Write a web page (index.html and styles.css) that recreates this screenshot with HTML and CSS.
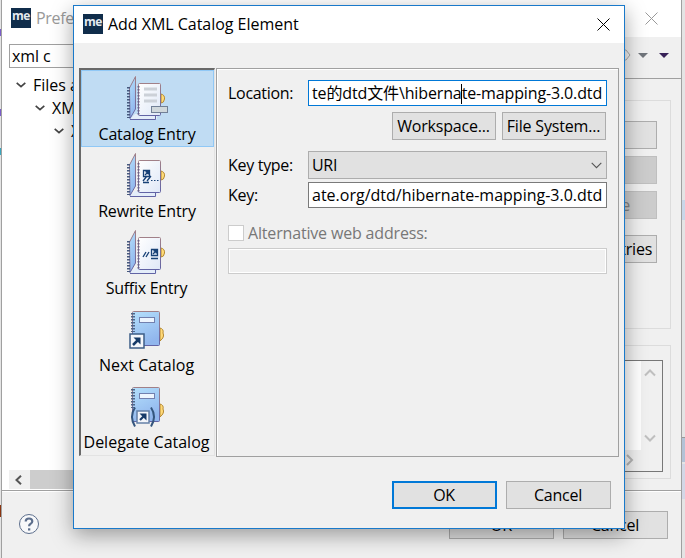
FILE: index.html
```html
<!DOCTYPE html>
<html lang="en">
<head>
<meta charset="utf-8">
<title>Add XML Catalog Element</title>
<link rel="stylesheet" href="styles.css">
</head>
<body>
<svg class="defs" width="0" height="0" aria-hidden="true">
  <defs>
    <linearGradient id="blue" x1="0" y1="0" x2="0.4" y2="1"><stop stop-color="#b4e0fc"/><stop offset="1" stop-color="#91b6ed"/></linearGradient>
    <linearGradient id="paper" x1="0" y1="0" x2="1" y2="1"><stop stop-color="#fff"/><stop offset="1" stop-color="#dfe8f7"/></linearGradient>
    <linearGradient id="edge" x1="0" y1="0" x2="0" y2="1"><stop stop-color="#a18088"/><stop offset="1" stop-color="#6264a5"/></linearGradient>
    <g id="binder">
      <path d="M4 43 L9 38 H31 V43 Z" fill="#e4edf9"/>
      <path d="M4 43.500H29.500V40" fill="none" stroke="#6264a5"/>
      <path d="M3.500 12 L9.500 .5 V33 L4 42.500Z" fill="url(#blue)" stroke="url(#edge)"/>
      <path d="M2.500 11V42" stroke="#46587e" stroke-width="3" stroke-dasharray="1.500 1.500"/>
      <path d="M35 18q4 1 3.500 5t-3.500 4z" fill="#ffdb78" stroke="#b58a35"/>
      <rect x="12.500" y="7.500" width="22" height="32" rx="1" fill="url(#paper)" stroke="url(#edge)"/>
      <path d="M12.500 10V39" stroke="#6b6286" stroke-width="2" stroke-dasharray="1.500 1.500"/>
    </g>
    <g id="book">
      <path d="M33 18q4 1 3 5q2 4-3 8z" fill="#ffd978" stroke="#b58a35"/>
      <rect x="5.500" y="1.500" width="27" height="34" rx="1" fill="url(#blue)" stroke="url(#edge)"/>
      <path d="M6 3V22" stroke="#506688" stroke-width="4" stroke-dasharray="1.500 1.500"/>
      <rect x="12.500" y="7.500" width="15" height="5" fill="#edf5fe" stroke="#7280ae"/>
    </g>
  </defs>
</svg>
<div class="desktop">
  <div class="speck s1"></div><div class="speck s2"></div><div class="speck s3"></div><div class="speck s4"></div>
  <div class="speck s5"></div><div class="speck s6"></div><div class="speck s7"></div>

  <section class="prefs">
    <header class="prefs-title"><span class="logo">me</span><span class="t">Preferences</span>
      <svg class="x" width="13" height="13"><path d="M.5.5l12 12M12.500.5l-12 12" stroke="#999" fill="none"/></svg>
    </header>
    <div class="prefs-main">
      <aside class="side">
        <div class="filter">xml c</div>
        <div class="tree">
          <div class="node l1"><svg width="10" height="6"><path d="M.7.8L5 4.600 9.300.8" fill="none" stroke="#444" stroke-width="1.700"/></svg>Files and Editors</div>
          <div class="node l2"><svg width="10" height="6"><path d="M.7.8L5 4.600 9.300.8" fill="none" stroke="#444" stroke-width="1.700"/></svg>XML</div>
          <div class="node l3"><svg width="10" height="6"><path d="M.7.8L5 4.600 9.300.8" fill="none" stroke="#444" stroke-width="1.700"/></svg>XML Catalog</div>
        </div>
        <div class="hscroll"><span class="arrow"><svg width="7" height="10"><path d="M6 .8L1.500 5 6 9.200" fill="none" stroke="#555" stroke-width="2"/></svg></span><span class="thumb"></span></div>
      </aside>
      <div class="page">
        <div class="tools">
          <svg width="60" height="14"><path d="M3 2h4l4 5-4 5H3" fill="none" stroke="#aaa"/><path d="M19 5h10l-5 5z" fill="#70757b"/><path d="M40 5h10l-5 5z" fill="#382258"/></svg>
        </div>
        <div class="group g1">
          <button class="btn">Add...</button><button class="btn off edit">Edit...</button><button class="btn off">Remove</button><button class="btn last">Reload Entries</button>
        </div>
        <div class="group g2">
          <div class="details"><div class="paper"></div>
            <div class="vbar"><svg width="12" height="8"><path d="M1 6.500L6 1.500l5 5" fill="none" stroke="#bfbfbf" stroke-width="2"/></svg><svg width="12" height="8"><path d="M1 1.500l5 5 5-5" fill="none" stroke="#bfbfbf" stroke-width="2"/></svg></div>
            <div class="hbar"><svg width="8" height="12"><path d="M1 1l5 5-5 5" fill="none" stroke="#b5b5b5" stroke-width="2"/></svg></div>
          </div>
        </div>
      </div>
    </div>
    <footer class="prefs-foot">
      <svg class="help" width="22" height="22"><circle cx="11" cy="11" r="9.500" fill="#f7f8fa" stroke="#5d6f8d"/><path d="M7.700 8.500Q7.800 5.500 11 5.500t3.300 2.800Q14.300 10 12.400 11 11.100 11.700 11.100 13.300" fill="none" stroke="#5d6f8d" stroke-width="2.200"/><path d="M10 15.300h2.300v2.200H10z" fill="#5d6f8d"/></svg>
      <button class="btn">OK</button><button class="btn">Cancel</button>
    </footer>
  </section>

  <section class="dialog">
    <header class="dialog-title"><span class="logo">me</span><span class="t">Add XML Catalog Element</span>
      <svg class="x" width="13" height="13"><path d="M.5.5l12 12M12.500.5l-12 12" stroke="#000" fill="none"/></svg>
    </header>
    <div class="dialog-main">
      <nav class="kinds">
        <div class="kind sel"><svg width="42" height="45"><use href="#binder"/><path d="M18 13h13M18 19h13M18 25h13" stroke="#ccd1d8" stroke-width="3"/><rect x="25.500" y="30.500" width="16" height="6" fill="#d0d8dc" stroke="#718096"/></svg><span class="n1">Catalog Entry</span></div>
        <div class="kind"><svg width="42" height="45"><use href="#binder"/><path d="M17.500 17.500h6v6h-6zM19 22l3-3M19.500 18.800h2.700v2.700M17 28l4-5M21 28l4-5M17 29.500h6" fill="none" stroke="#174176" stroke-width="1.300"/><path d="M25 27.500h8" stroke="#174176" stroke-dasharray="1.500 1.500"/></svg><span class="n2">Rewrite Entry</span></div>
        <div class="kind"><svg width="42" height="45"><use href="#binder"/><path d="M25.500 19.500h6v6h-6zM27 24l3-3M27.500 20.800h2.700v2.700M17 27l3-5M20 27l3-5M25 28.500h7" fill="none" stroke="#174176" stroke-width="1.300"/></svg><span class="n3">Suffix Entry</span></div>
        <div class="kind"><svg width="42" height="45"><use href="#book" x="1" y="3"/><rect x="4" y="27" width="14" height="14" fill="#f5f7fb" stroke="#3d5d87" stroke-width="1.500"/><path d="M7 38l6-6" stroke="#173b68" stroke-width="2.500"/><path d="M7.500 30.500h7v7z" fill="#173b68"/></svg><span class="n4">Next Catalog</span></div>
        <div class="kind"><svg width="42" height="45"><use href="#book" x="1" y="2"/><rect x="11" y="27" width="12" height="12" fill="#f2f5fa" stroke="#6480a7" stroke-width="1.500"/><path d="M14 36l5-5" stroke="#173b68" stroke-width="2.200"/><path d="M13.500 29.500h7v7z" fill="#173b68"/><path d="M9 23.500q-6 9 0 19M25 23.500q6 9 0 19" fill="none" stroke="#34567e" stroke-width="2"/></svg><span class="n5">Delegate Catalog</span></div>
      </nav>
      <form class="panel">
        <div class="row location"><label>Location:</label><div class="field focus"><span class="v v1">te的dtd文件\hiberna<i class="caret"></i>te-mapping-3.0.dtd</span></div></div>
        <div class="browse"><button type="button" class="btn">Workspace...</button><button type="button" class="btn">File System...</button></div>
        <div class="row keytype"><label>Key type:</label><div class="combo"><span>URI</span><svg width="11" height="7"><path d="M.7.8l4.800 4.800L10.300.8" fill="none" stroke="#555" stroke-width="1.100"/></svg></div></div>
        <div class="row key"><label>Key:</label><div class="field"><span class="v v2">ate.org/dtd/hibernate-mapping-3.0.dtd</span></div></div>
        <div class="alt"><span class="box"></span><span>Alternative web address:</span></div>
        <div class="field disabled"></div>
      </form>
    </div>
    <footer class="dialog-foot"><button class="btn default">OK</button><button class="btn">Cancel</button></footer>
  </section>
</div>
</body>
</html>
```
FILE: styles.css
```css
* { box-sizing: border-box; }
body { margin: 0; overflow: hidden; font: 16px/22px "Open Sans", "Noto Sans CJK SC", sans-serif; letter-spacing: -.3px; color: #000; }
svg { display: block; flex: none; }
.defs { position: absolute; }
.desktop { position: relative; width: 685px; height: 558px; overflow: hidden; background: #e4e4e4; }
.speck { position: absolute; left: 0; width: 2px; height: 7px; background: #7a5cc8; }
.s1 { top: 29px; } .s2 { top: 109px; } .s3 { top: 148px; background: #3aa6bd; }
.s4 { top: 505px; height: 12px; background: #8a3510; }
.s5 { left: 682px; width: 3px; top: 200px; height: 20px; background: #c9d6e8; }
.s6 { left: 682px; width: 3px; top: 437px; height: 25px; background: #b3c2d6; border-top: 1px solid #999; }
.s7 { left: 682px; width: 3px; top: 464px; height: 35px; background: #d3d7e6; }
.btn { display: flex; align-items: center; justify-content: center; height: 28px; width: 105px; padding: 0 1px 0 0; border: 1px solid #adadad; background: #e1e1e1; font: inherit; letter-spacing: -.25px; color: #000; white-space: nowrap; flex: none; }
.logo { width: 20px; height: 20px; background: #102d4b; color: #e4eaf0; font: bold 12px/16px "Open Sans", sans-serif; text-align: center; letter-spacing: -.5px; flex: none; }
.t { white-space: nowrap; }
.x { margin-left: auto; }

.prefs { position: absolute; left: 1px; top: -1px; width: 681px; height: 580px; border: 1px solid #a0a0a0; background: #f0f0f0; display: flex; flex-direction: column; }
.prefs-title { height: 37px; background: #fff; display: flex; align-items: center; padding: 0 23px 1px 9px; color: #999; flex: none; }
.prefs-title .t { margin-left: 5px; }
.prefs-main { height: 454px; display: flex; flex: none; border-bottom: 1px solid #a0a0a0; }
.side { width: 180px; padding-left: 7px; background: #fff; display: flex; flex-direction: column; }
.filter { height: 24px; margin-top: 7px; border: 1px solid #a0a0a0; padding-left: 2px; line-height: 23px; flex: none; letter-spacing: -.1px; }
.tree { flex: 1; padding-top: 5px; overflow: hidden; }
.node { height: 23px; display: flex; align-items: center; gap: 7px; white-space: nowrap; letter-spacing: 0; }
.l1 { padding-left: 7px; } .l2 { padding-left: 26px; } .l3 { padding-left: 45px; }
.hscroll { height: 19px; margin-bottom: 1px; display: flex; }
.arrow { width: 21px; background: #f0f0f0; display: flex; align-items: center; justify-content: center; padding-right: 2px; }
.thumb { flex: 1; background: #cdcdcd; }
.page { flex: 1; }
.tools { height: 42px; display: flex; justify-content: flex-end; padding: 11px 2px 0 0; border-bottom: 1px solid #a0a0a0; }
.group { border: 1px solid #dcdcdc; margin: 0 10px 0 8px; }
.g1 { height: 229px; margin-top: 21px; padding: 20px 13px 0; display: flex; flex-direction: column; align-items: flex-end; gap: 7px; }
.g1 .btn { width: 122px; }
.g1 .off { background: #ccc; border-color: #bfbfbf; color: #838383; justify-content: flex-end; padding-right: 26px; }
.g1 .edit { padding-right: 36px; }
.g1 .last { margin-top: 9px; justify-content: flex-end; padding-right: 4px; }
.g2 { height: 134px; margin-top: 16px; padding: 14px 7px 0 8px; }
.details { height: 112px; border: 1px solid #777; display: grid; grid-template: 1fr 21px / 1fr 21px; }
.paper { background: #fff; }
.vbar { display: flex; flex-direction: column; justify-content: space-between; align-items: center; padding: 8px 3px 8px 0; }
.hbar { display: flex; align-items: center; justify-content: flex-end; padding: 0 7px 2px 0; }
.prefs-foot { border-top: 1px solid #fff; display: flex; align-items: flex-start; gap: 9px; padding: 19px 13px 0 16px; }
.help { margin: 2px auto 0 0; }

.dialog { position: absolute; left: 73px; top: 5px; width: 552px; height: 524px; border: 1px solid #1979ca; background: #f0f0f0; box-shadow: 0 6px 20px rgba(0,0,0,.36); display: flex; flex-direction: column; }
.dialog-title { height: 37px; background: #fff; display: flex; align-items: center; padding: 0 14px 1px 9px; flex: none; }
.dialog-title .t { margin-left: 5px; letter-spacing: -.03px; }
.dialog-main { display: flex; padding: 25px 0 0 5px; height: 414px; }
.kinds { width: 136px; height: 388px; border: 2px solid #696969; border-right-color: #e3e3e3; border-bottom-color: #e3e3e3; border-width: 2px 1px 1px 2px; flex: none; }
.kind { height: 77px; display: flex; flex-direction: column; align-items: center; padding: 5px 1px 0 0; border: 1px solid transparent; }
.sel { background: #c0dcf3; border-color: #90c8f6; }
.kind span { margin-top: 2px; white-space: nowrap; letter-spacing: -.15px; }
.kind .n3 { letter-spacing: -.28px; margin-right: 1px; }
.kind .n4, .kind .n5 { letter-spacing: 0; margin-right: 1px; }
.panel { width: 403px; height: 389px; margin-left: 1px; border: 1px solid #a0a0a0; box-shadow: inset 1px 1px #fff; padding: 11px; flex: none; }
.row { display: flex; align-items: center; }
.row label { width: 80px; white-space: nowrap; flex: none; }
.field { flex: 1; height: 26px; border: 1px solid #7a7a7a; background: #fff; min-width: 0; overflow: hidden; display: flex; align-items: center; padding: 0 3px; }
.focus { border-color: #0078d7; }
.v { white-space: nowrap; }
.v1 { letter-spacing: -.13px; }
.v2 { letter-spacing: 0; }
.caret { display: inline-block; width: 1px; height: 20px; margin: 0 0 0 -1px; background: #000; vertical-align: -5px; }
.browse { display: flex; justify-content: flex-end; gap: 6px; margin-top: 6px; padding-right: 1px; }
.browse .btn { width: 104px; letter-spacing: -.18px; }
.keytype { margin-top: 11px; }
.combo { flex: 1; height: 28px; border: 1px solid #adadad; background: #e1e1e1; display: flex; align-items: center; justify-content: space-between; padding: 0 4px 0 3px; }
.key { margin-top: 3px; }
.alt { margin-top: 14px; display: flex; align-items: center; gap: 4px; color: #777; letter-spacing: -.17px; }
.box { width: 16px; height: 16px; border: 1px solid #ccc; background: #fff; }
.disabled { margin-top: 4px; border-color: #ccc; background: #f0f0f0; box-shadow: inset 0 0 0 1px #fff; }
.dialog-foot { display: flex; justify-content: flex-end; gap: 9px; padding: 24px 13px 0 0; }
.default { border: 2px solid #0078d7; }
```
